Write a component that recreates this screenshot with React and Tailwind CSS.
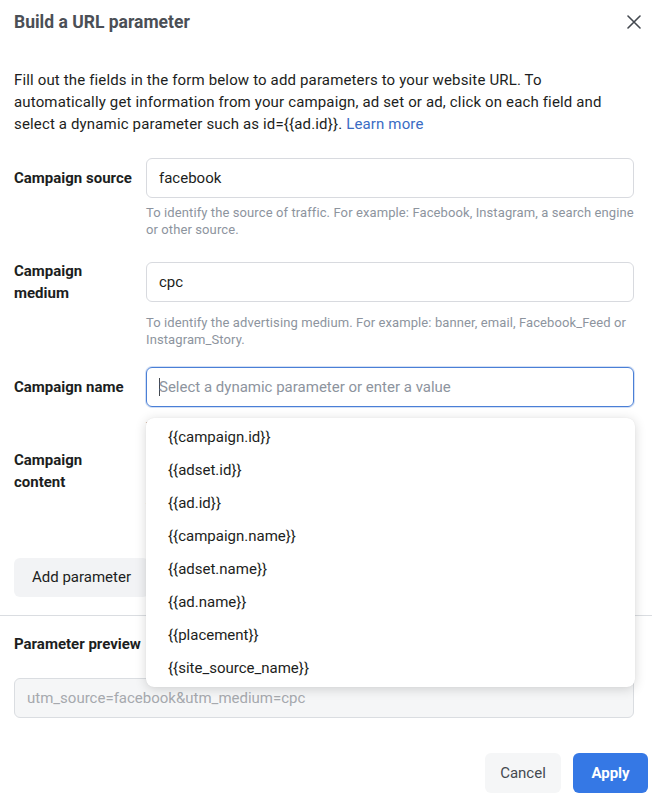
const FONT = "font-['Roboto','Liberation_Sans',sans-serif]";

const OPTIONS = [
  "{{campaign.id}}",
  "{{adset.id}}",
  "{{ad.id}}",
  "{{campaign.name}}",
  "{{adset.name}}",
  "{{ad.name}}",
  "{{placement}}",
  "{{site_source_name}}",
];

function Field({ value, placeholder, focused, disabled }) {
  return (
    <div
      className={
        "h-[40px] flex items-center rounded-[6px] border px-3 text-[15px] " +
        (focused
          ? "border-[#4a7fd6] shadow-[0_0_0_1px_rgba(74,127,214,0.25)]"
          : disabled
            ? "border-[#dadde1] bg-[#f5f6f7]"
            : "border-[#d8dadf]")
      }
    >
      {focused && <span className="w-px h-[18px] bg-[#444950] -mr-px" />}
      {value ? (
        <span className={disabled ? "text-[#a6a9ae]" : "text-[#1c1e21]"}>
          {value}
        </span>
      ) : (
        <span className="text-[#8d949e]">{placeholder}</span>
      )}
    </div>
  );
}

function Label({ children }) {
  return (
    <div className="w-[132px] shrink-0 pr-[12px] text-[15px] leading-[22px] font-bold text-[#1c1e21]">
      {children}
    </div>
  );
}

function Helper({ children, className = "" }) {
  return (
    <p
      className={
        "ml-[132px] text-[13px] leading-[17px] tracking-[0.1px] text-[#8d949e] " +
        className
      }
    >
      {children}
    </p>
  );
}

export default function App() {
  return (
    <div className={"w-[662px] h-[803px] bg-white overflow-hidden " + FONT}>
      <header className="h-[44px] flex items-center justify-between pl-[14px] pr-[21px]">
        <h1 className="text-[17.5px] font-bold text-[#4b4f56]">
          Build a URL parameter
        </h1>
        <svg width="14" height="14" viewBox="0 0 14 14" className="text-[#444950]">
          <path
            d="M1 1 L13 13 M13 1 L1 13"
            stroke="currentColor"
            strokeWidth="1.6"
            strokeLinecap="round"
          />
        </svg>
      </header>

      <div className="pl-[14px] pr-[28px]">
        <p className="mt-[25px] mr-[14px] text-[15px] leading-[22px] tracking-[0.15px] text-[#1c1e21]">
          Fill out the fields in the form below to add parameters to your
          website URL. To automatically get information from your campaign, ad
          set or ad, click on each field and select a dynamic parameter such as
          id={"{{ad.id}}"}.{" "}
          <span className="text-[#3a6cc4]">Learn more</span>
        </p>

        <div className="mt-[23px] flex items-center">
          <Label>Campaign source</Label>
          <div className="flex-1">
            <Field value="facebook" />
          </div>
        </div>
        <Helper className="mt-[6px]">
          To identify the source of traffic. For example: Facebook, Instagram, a
          search engine or other source.
        </Helper>

        <div className="mt-[22px] flex items-center">
          <Label>Campaign medium</Label>
          <div className="flex-1">
            <Field value="cpc" />
          </div>
        </div>
        <Helper className="mt-[10px]">
          To identify the advertising medium. For example: banner, email,
          Facebook_Feed or Instagram_Story.
        </Helper>

        <div className="relative">
          <div className="mt-[19px] flex items-center">
            <Label>Campaign name</Label>
            <div className="flex-1">
              <Field focused placeholder="Select a dynamic parameter or enter a value" />
            </div>
          </div>
          <Helper className="mt-[11px]">
            To identify a specific product promotion or strategic campaign.
          </Helper>

          <ul className="absolute z-10 top-[51px] left-[132px] right-[-1px] bg-white rounded-[8px] shadow-[0_2px_12px_rgba(0,0,0,0.16),0_0_1px_rgba(0,0,0,0.1)] pt-[3px] pb-[2px]">
            {OPTIONS.map((o) => (
              <li
                key={o}
                className="h-[33px] flex items-center pl-[22px] text-[15px] text-[#1c1e21]"
              >
                {o}
              </li>
            ))}
          </ul>
        </div>

        <div className="mt-[14px] flex items-center">
          <Label>Campaign content</Label>
          <div className="flex-1">
            <Field placeholder="Select a dynamic parameter or enter a value" />
          </div>
        </div>
        <Helper className="mt-[6px]">
          To differentiate ads or links that point to the same URL. For example:
          ad name or placement.
        </Helper>

        <button className="mt-[25px] h-[39px] px-[18px] rounded-[6px] bg-[#f2f3f5] text-[15px] text-[#1c1e21]">
          Add parameter
        </button>
      </div>

      <div className="mt-[18px] h-px w-[652px] bg-[#dadde1]" />

      <div className="pl-[14px] pr-[28px]">
        <div className="mt-[17px] text-[15px] leading-[22px] font-bold text-[#1c1e21]">
          Parameter preview
        </div>
        <div className="mt-[23px]">
          <Field disabled value="utm_source=facebook&utm_medium=cpc" />
        </div>
      </div>

      <div className="mt-[35px] flex justify-end gap-3 pr-[14px]">
        <button className="h-[40px] w-[76px] rounded-[6px] bg-[#f5f6f7] text-[15px] text-[#444950]">
          Cancel
        </button>
        <button className="h-[40px] w-[75px] rounded-[6px] bg-[#3578e5] text-[15px] font-bold text-white">
          Apply
        </button>
      </div>
    </div>
  );
}
